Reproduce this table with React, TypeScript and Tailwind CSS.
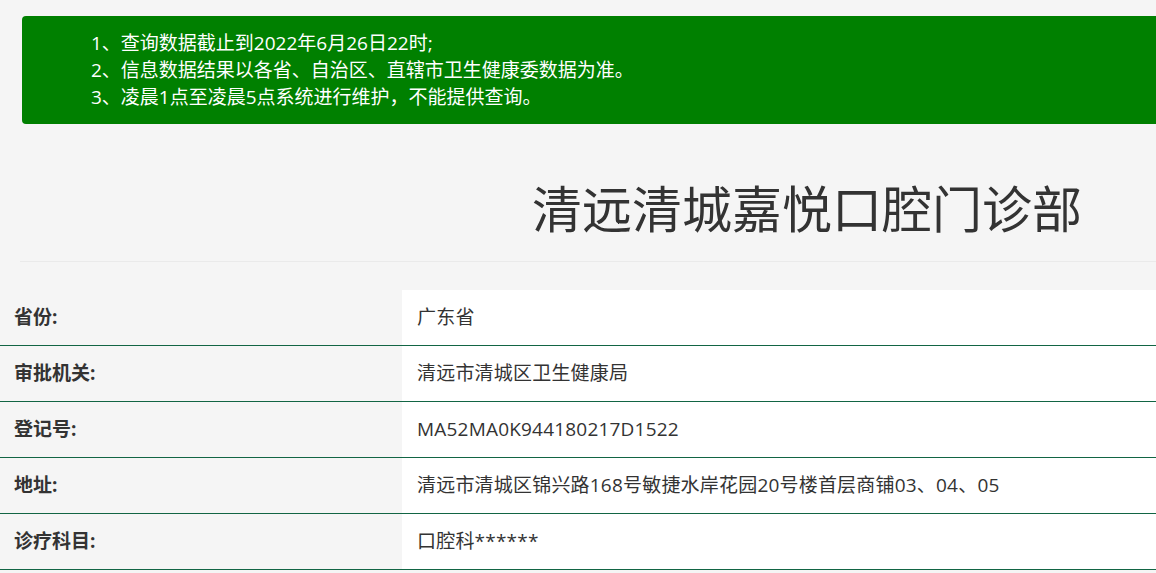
import React from 'react';

const rows: [string, string][] = [
  ['省份:', '广东省'],
  ['审批机关:', '清远市清城区卫生健康局'],
  ['登记号:', 'MA52MA0K944180217D1522'],
  ['地址:', '清远市清城区锦兴路168号敏捷水岸花园20号楼首层商铺03、04、05'],
  ['诊疗科目:', '口腔科******'],
];

const App: React.FC = () => {
  return (
    <div
      className="min-h-screen bg-[#f5f5f5] text-[#333] overflow-hidden"
      style={{ fontFamily: '"Open Sans", "Noto Sans CJK SC", sans-serif' }}
    >
      {/* Notice */}
      <div className="pt-4 pl-[22px]">
        <div className="bg-[#008000] rounded-l-[4px] h-[108px] pl-[69px] pt-[14px] text-white text-[19px] leading-[27px]">
          <p>1、查询数据截止到2022年6月26日22时;</p>
          <p>2、信息数据结果以各省、自治区、直辖市卫生健康委数据为准。</p>
          <p>3、凌晨1点至凌晨5点系统进行维护，不能提供查询。</p>
        </div>
      </div>

      {/* Title */}
      <div className="ml-5 border-b border-[#eaeaea] h-[138px] flex items-center justify-center pl-[438px]">
        <h1 className="text-[50px] leading-none text-[#333] whitespace-nowrap mt-[32px]">清远清城嘉悦口腔门诊部</h1>
      </div>

      {/* Table */}
      <div className="mt-[28px]">
        {rows.map(([label, value]) => (
          <div key={label} className="flex h-[56px] border-b border-[#126544]">
            <div className="w-[402px] shrink-0 flex items-center pl-[14px] text-[19px] font-bold text-[#333]">
              {label}
            </div>
            <div className="flex-1 bg-white flex items-center pl-[15px] text-[19px] text-[#333] tracking-[0.2px]">
              {value}
            </div>
          </div>
        ))}
      </div>
    </div>
  );
};

export default App;
